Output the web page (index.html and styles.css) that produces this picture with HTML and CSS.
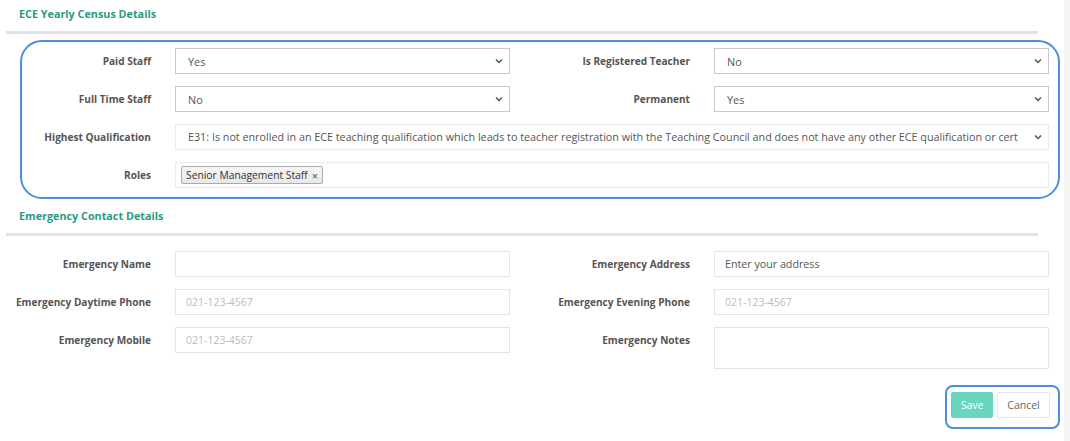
FILE: index.html
```html
<!DOCTYPE html>
<html>
<head>
<meta charset="utf-8">
<link rel="stylesheet" href="styles.css">
</head>
<body>
<div class="page">
  <h3 class="section-title first">ECE Yearly Census Details</h3>
  <div class="divider"></div>
  <div class="fields census highlight">
    <div class="row">
      <div class="field">
        <label class="lbl">Paid Staff</label>
        <div class="ctl select dark"><span>Yes</span><svg class="chev" width="8" height="6" viewBox="0 0 8 6"><path d="M1 1.5 L4 4.5 L7 1.5" fill="none" stroke="#555" stroke-width="1.5"/></svg></div>
      </div>
      <div class="field">
        <label class="lbl">Is Registered Teacher</label>
        <div class="ctl select dark"><span>No</span><svg class="chev" width="8" height="6" viewBox="0 0 8 6"><path d="M1 1.5 L4 4.5 L7 1.5" fill="none" stroke="#555" stroke-width="1.5"/></svg></div>
      </div>
    </div>
    <div class="row">
      <div class="field">
        <label class="lbl">Full Time Staff</label>
        <div class="ctl select dark"><span>No</span><svg class="chev" width="8" height="6" viewBox="0 0 8 6"><path d="M1 1.5 L4 4.5 L7 1.5" fill="none" stroke="#555" stroke-width="1.5"/></svg></div>
      </div>
      <div class="field">
        <label class="lbl">Permanent</label>
        <div class="ctl select dark"><span>Yes</span><svg class="chev" width="8" height="6" viewBox="0 0 8 6"><path d="M1 1.5 L4 4.5 L7 1.5" fill="none" stroke="#555" stroke-width="1.5"/></svg></div>
      </div>
    </div>
    <div class="row wide">
      <div class="field">
        <label class="lbl">Highest Qualification</label>
        <div class="ctl select light"><span class="clip">E31: Is not enrolled in an ECE teaching qualification which leads to teacher registration with the Teaching Council and does not have any other ECE qualification or cert</span><svg class="chev" width="8" height="6" viewBox="0 0 8 6"><path d="M1 1.5 L4 4.5 L7 1.5" fill="none" stroke="#555" stroke-width="1.5"/></svg></div>
      </div>
    </div>
    <div class="row wide">
      <div class="field">
        <label class="lbl">Roles</label>
        <div class="ctl tags light"><span class="tag">Senior Management Staff <span class="x">×</span></span></div>
      </div>
    </div>
  </div>

  <h3 class="section-title second">Emergency Contact Details</h3>
  <div class="divider"></div>
  <div class="fields emergency">
    <div class="row">
      <div class="field">
        <label class="lbl">Emergency Name</label>
        <div class="ctl input"></div>
      </div>
      <div class="field">
        <label class="lbl">Emergency Address</label>
        <div class="ctl input"><span class="val">Enter your address</span></div>
      </div>
    </div>
    <div class="row">
      <div class="field">
        <label class="lbl">Emergency Daytime Phone</label>
        <div class="ctl input"><span class="ph">021-123-4567</span></div>
      </div>
      <div class="field">
        <label class="lbl">Emergency Evening Phone</label>
        <div class="ctl input"><span class="ph">021-123-4567</span></div>
      </div>
    </div>
    <div class="row">
      <div class="field">
        <label class="lbl">Emergency Mobile</label>
        <div class="ctl input"><span class="ph">021-123-4567</span></div>
      </div>
      <div class="field">
        <label class="lbl">Emergency Notes</label>
        <div class="ctl input notes"></div>
      </div>
    </div>
  </div>

  <div class="actions">
    <div class="btns">
      <button class="btn save">Save</button>
      <button class="btn cancel">Cancel</button>
    </div>
  </div>
</div>
</body>
</html>
```

FILE: styles.css
```css
html {
  background: #f4f4f4;
}
body {
  margin: 0;
  font-family: "Open Sans", "DejaVu Sans", sans-serif;
}
.page {
  width: 1064px;
  min-height: 441px;
  background: #fff;
  display: flex;
  flex-direction: column;
}
.section-title {
  margin: 0;
  padding-left: 19px;
  font-size: 10.8px;
  font-weight: 700;
  line-height: 16px;
  color: #2a9a82;
}
.section-title.first {
  margin-top: 6px;
}
.section-title.second {
  margin-top: 9px;
}
.divider {
  margin-top: 9px;
  margin-left: 6px;
  width: 1032px;
  height: 3px;
  background: #e2e2e2;
}
.fields {
  display: flex;
  flex-direction: column;
  gap: 12px;
  position: relative;
}
.census {
  padding-top: 14px;
  padding-bottom: 11px;
}
.emergency {
  padding-top: 15px;
}
.highlight::before {
  content: "";
  position: absolute;
  left: 20px;
  top: 6px;
  width: 1040px;
  height: 159px;
  box-sizing: border-box;
  border: 2px solid #4a8fd8;
  border-radius: 22px;
  pointer-events: none;
}
.row {
  display: grid;
  grid-template-columns: 539px 510px;
}
.row.wide {
  grid-template-columns: 1049px;
}
.field {
  display: flex;
  align-items: flex-start;
  gap: 24px;
}
.lbl {
  flex: 0 0 151px;
  text-align: right;
  font-size: 10.1px;
  font-weight: 700;
  line-height: 26px;
  color: #555;
  white-space: nowrap;
}
.ctl {
  flex: 0 0 335px;
  min-width: 0;
  height: 26px;
  box-sizing: border-box;
  display: flex;
  align-items: center;
  padding: 0 12px;
  font-size: 10.5px;
  color: #555;
  background: #fff;
}
.wide .ctl {
  flex: 1 1 auto;
}
.select {
  justify-content: space-between;
  gap: 10px;
  padding-right: 6px;
  font-size: 10.85px;
}
.select .clip {
  font-size: 10.75px;
}
.select.dark {
  border: 1px solid #c9c9c9;
}
.select.light,
.tags.light {
  border: 1px solid #ebebeb;
}
.clip {
  white-space: nowrap;
  overflow: hidden;
  flex: 1 1 auto;
  min-width: 0;
}
.chev {
  flex: 0 0 auto;
}
.tags {
  padding: 0 5px;
}
.tag {
  display: inline-flex;
  align-items: center;
  gap: 4px;
  height: 18px;
  box-sizing: border-box;
  padding: 0 4px;
  border: 1px solid #aaa;
  border-radius: 2px;
  background: linear-gradient(#f6f6f6, #e8e8e8);
  font-size: 10.3px;
  color: #333;
}
.tag .x {
  color: #777;
  font-weight: 700;
  font-size: 11px;
}
.input {
  border: 1px solid #e5e5e5;
  padding: 0 10px;
}
.input .val {
  font-size: 10.7px;
}
.input.notes {
  height: 42px;
}
.ph {
  color: #bcbcbc;
}
.val {
  color: #555;
}
.actions {
  display: flex;
  justify-content: flex-end;
  padding-right: 14px;
  margin-top: 23px;
}
.btns {
  display: flex;
  gap: 4px;
  position: relative;
}
.btns::before {
  content: "";
  position: absolute;
  left: -6px;
  top: -7px;
  right: -10px;
  bottom: -11px;
  border: 2px solid #4a8fd8;
  border-radius: 8px;
  pointer-events: none;
}
.btn {
  height: 26px;
  font-family: "Open Sans", "DejaVu Sans", sans-serif;
  font-size: 10.5px;
  border-radius: 2px;
  padding: 0;
  cursor: pointer;
}
.save {
  width: 42px;
  background: #68d6be;
  border: 1px solid #68d6be;
  color: #fff;
}
.cancel {
  width: 53px;
  background: #fff;
  border: 1px solid #e8e8e8;
  color: #666;
}
```
